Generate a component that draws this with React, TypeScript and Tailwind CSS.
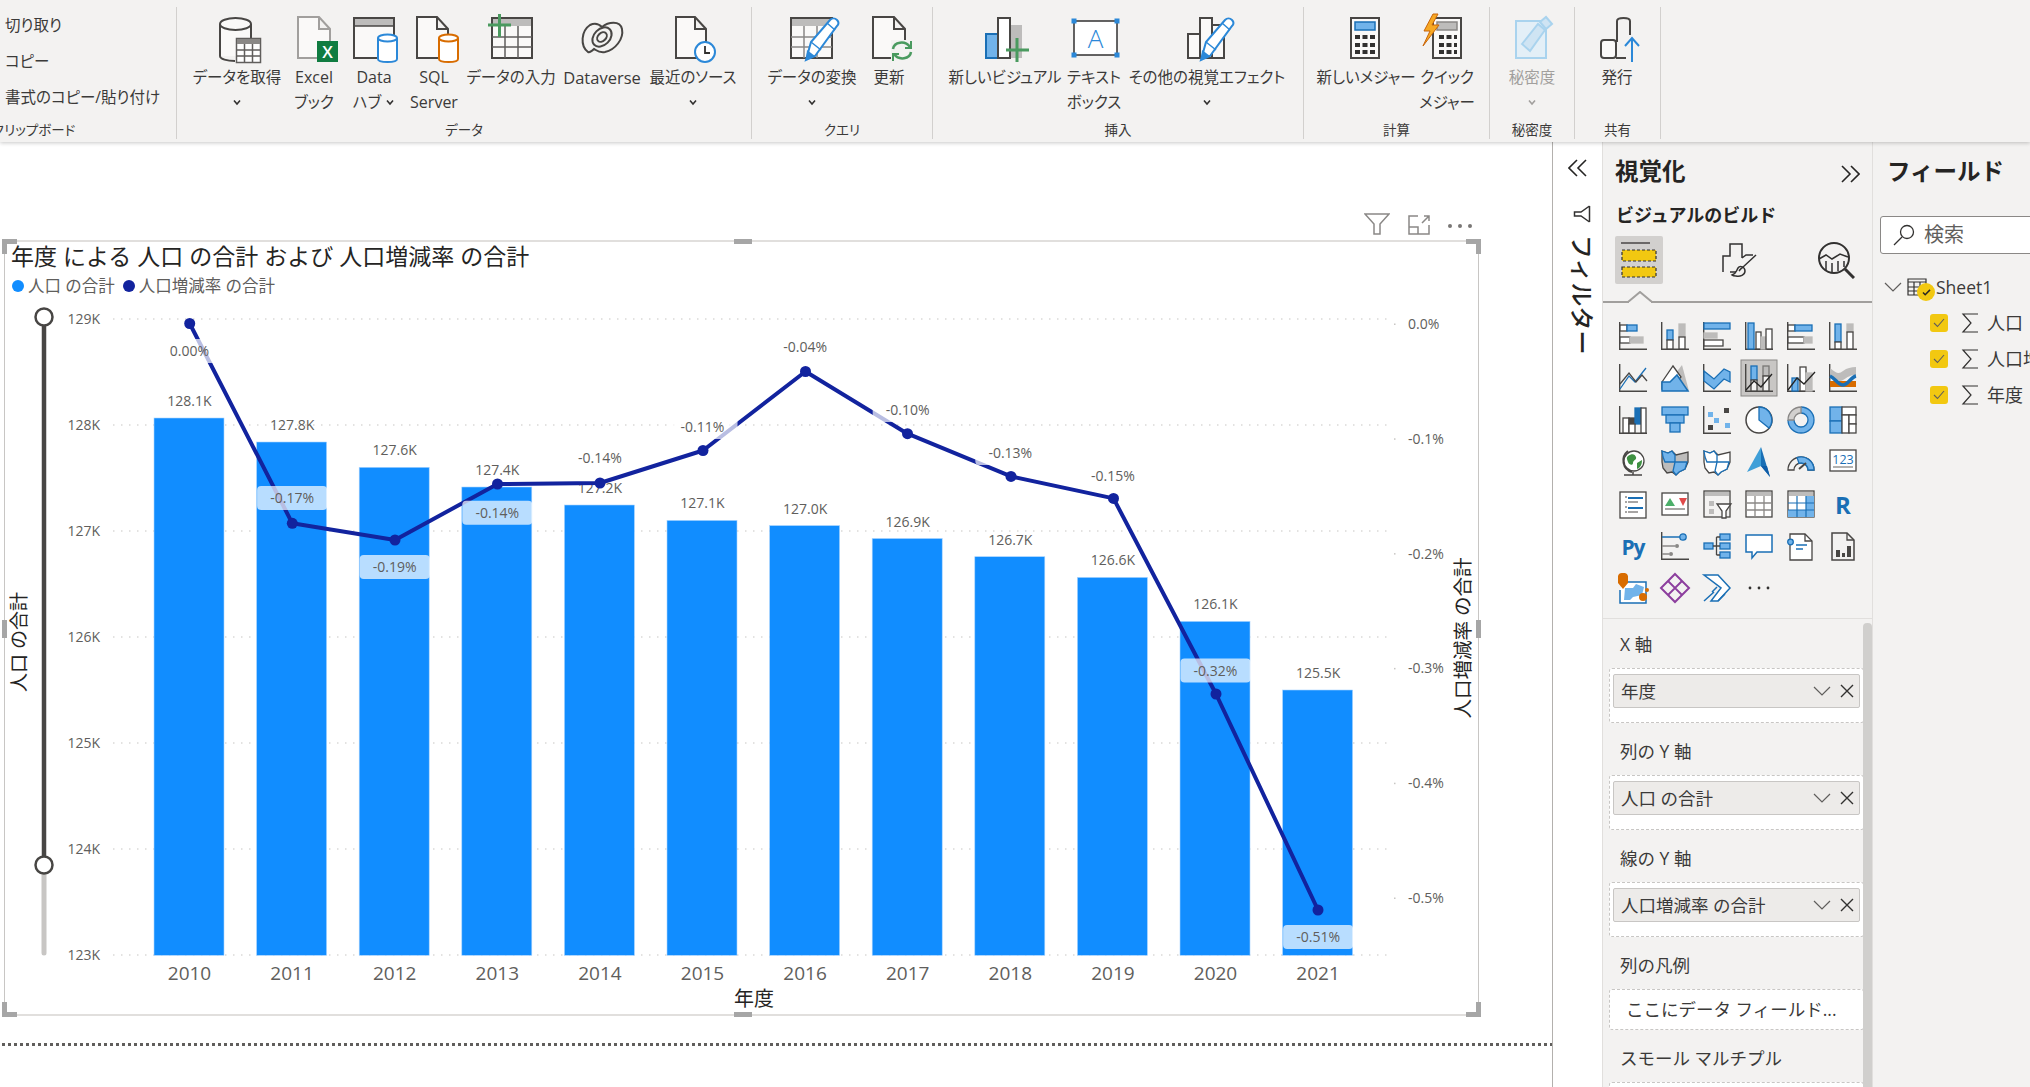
import type { ReactNode } from 'react';

const D = '#484644';
const B = '#1a6fb5';
const L = '#71b3ea';
const G = '#bdbcbb';
const W = '#ffffff';
const Y = '#f2c811';

function Chevron({ className = 'w-[10px] h-[7px]', color = '#323130' }: { className?: string; color?: string }) {
  return (
    <svg viewBox="0 0 10 7" className={className} fill="none" stroke={color} strokeWidth="1.6">
      <path d="M2 1.5l3 3.5 3-3.5" />
    </svg>
  );
}

function Pencil({ x, y, scale = 1 }: { x: number; y: number; scale?: number }) {
  return (
    <g transform={`translate(${x} ${y}) scale(${scale})`} fill="none">
      <path d="M0 28L5 10 24-12c2-2 5-2 7 0s2 4 0 6L9 24z" fill="#fff" stroke="#2b88d8" strokeWidth="2" />
      <path d="M0 28l1-10 8 6z" fill="#2b88d8" />
      <path d="M5 10l10 8M21-9l8 7" stroke="#2b88d8" strokeWidth="1.5" />
    </g>
  );
}

function Cylinder({ x, y, w, h, color, fill = '#fff' }: { x: number; y: number; w: number; h: number; color: string; fill?: string }) {
  const rx = w / 2;
  return (
    <g stroke={color} strokeWidth="2" fill={fill}>
      <path d={`M${x} ${y + 3}v${h - 6}c0 4 ${w} 4 ${w} 0v-${h - 6}`} />
      <ellipse cx={x + rx} cy={y + 3} rx={rx} ry="3.5" />
    </g>
  );
}

function Doc({ x, w = 31, color = '#605e5c', bg = '#faf9f8' }: { x: number; w?: number; color?: string; bg?: string }) {
  return (
    <path d={`M${x} 1h${w - 11}l11 12v29h-${w}zM${x + w - 11} 1v12h11`} fill={bg} stroke={color} strokeWidth="2" />
  );
}

function RibbonIcon({ children }: { children: ReactNode }) {
  return (
    <svg viewBox="0 0 48 48" className="w-[48px] h-[48px] shrink-0 overflow-visible" fill="none">
      {children}
    </svg>
  );
}

function RibbonButton({
  icon,
  lines,
  chevron,
  chevronColor,
  className,
  textClass = 'text-[15.5px] text-[#3b3a39]',
}: {
  icon: ReactNode;
  lines: ReactNode[];
  chevron?: boolean;
  chevronColor?: string;
  className: string;
  textClass?: string;
}) {
  return (
    <div className={`flex flex-col items-center shrink-0 whitespace-nowrap ${textClass} leading-[25px] ${className}`}>
      {icon}
      <div className="mt-[1px]" />
      {lines.map((line, i) => (
        <div key={i} className="flex items-center gap-[4px]">
          {line}
        </div>
      ))}
      {chevron && (
        <div className="h-[25px] flex items-center">
          <Chevron color={chevronColor} />
        </div>
      )}
    </div>
  );
}

function RibbonGroup({
  label,
  className,
  labelClass = 'text-center',
  children,
}: {
  label: string;
  className: string;
  labelClass?: string;
  children: ReactNode;
}) {
  return (
    <div className={`mt-[7px] h-[132px] flex flex-col border-r border-[#d2d0ce] shrink-0 ${className}`}>
      <div className="h-[114px] flex items-start">{children}</div>
      <div className={`h-[18px] leading-[18px] text-[13.5px] text-[#3b3a39] whitespace-nowrap ${labelClass}`}>{label}</div>
    </div>
  );
}

function Ribbon() {
  return (
    <div className="h-[142px] bg-[#f3f2f1] flex shrink-0 shadow-[0_1px_4px_rgba(0,0,0,0.22)] relative z-10 [font-feature-settings:'palt']">
      <RibbonGroup label="クリップボード" className="w-[177px] overflow-hidden" labelClass="-ml-[8px]">
        <div className="pl-[5px] pt-[0px] text-[15.5px] text-[#3b3a39] whitespace-nowrap">
          <div className="h-[36px] leading-[36px]">切り取り</div>
          <div className="h-[36px] leading-[36px]">コピー</div>
          <div className="h-[36px] leading-[36px]">書式のコピー/貼り付け</div>
        </div>
      </RibbonGroup>

      <RibbonGroup label="データ" className="w-[575px]">
        <div className="flex pl-[22px] pt-[9px]">
          <RibbonButton
            className="w-[76px]"
            lines={['データを取得']}
            chevron
            icon={
              <RibbonIcon>
                <path d="M7 8c0-8 31-8 31 0v32H7z" fill="#faf9f8" stroke="none" />
                <path d="M7 40V8" stroke="#484644" strokeWidth="2" />
                <path d="M38 22V8" stroke="#484644" strokeWidth="2" />
                <ellipse cx="22.5" cy="8" rx="15.5" ry="6" fill="#faf9f8" stroke="#484644" strokeWidth="2" />
                <path d="M7 40c0 3 7 5 15 5" stroke="#484644" strokeWidth="2" />
                <rect x="23.5" y="22.5" width="24" height="24" fill="#fff" stroke="#605e5c" strokeWidth="1.5" />
                <rect x="24" y="23" width="23" height="5" fill="#8a8886" />
                <path d="M24 34h23M24 40h23M31.5 28v18M39.5 28v18" stroke="#605e5c" strokeWidth="1.5" />
              </RibbonIcon>
            }
          />
          <RibbonButton
            className="w-[78px]"
            textClass="text-[16px] text-[#3b3a39]"
            lines={['Excel', <span className="text-[15.5px]">ブック</span>]}
            icon={
              <RibbonIcon>
                <Doc x={8} w={32} color="#a19f9d" />
                <rect x="27" y="25" width="21" height="21" fill="#107c41" />
                <text x="37.5" y="42" fontSize="17" fill="#fff" textAnchor="middle" fontWeight="600">X</text>
              </RibbonIcon>
            }
          />
          <RibbonButton
            className="w-[42px]"
            textClass="text-[16px] text-[#3b3a39]"
            lines={[
              'Data',
              <>
                <span className="text-[15.5px]">ハブ</span>
                <Chevron />
              </>,
            ]}
            icon={
              <RibbonIcon>
                <rect x="4" y="2" width="40" height="40" fill="#faf9f8" stroke="#484644" strokeWidth="2" />
                <rect x="5" y="3" width="38" height="7" fill="#bdbcbb" />
                <path d="M4 10h40" stroke="#484644" strokeWidth="1.5" />
                <Cylinder x={28} y={19} w={19} h={27} color="#2b88d8" />
              </RibbonIcon>
            }
          />
          <RibbonButton
            className="w-[78px]"
            textClass="text-[16px] text-[#3b3a39]"
            lines={['SQL', 'Server']}
            icon={
              <RibbonIcon>
                <Doc x={7} w={31} color="#484644" />
                <Cylinder x={29} y={19} w={19} h={27} color="#d86c00" />
              </RibbonIcon>
            }
          />
          <RibbonButton
            className="w-[76px]"
            lines={['データの入力']}
            icon={
              <RibbonIcon>
                <rect x="5" y="2" width="40" height="40" fill="#faf9f8" stroke="#484644" strokeWidth="2" />
                <rect x="6" y="3" width="38" height="7" fill="#bdbcbb" />
                <path d="M5 21h40M5 31h40M18 10v32M31 10v32" stroke="#605e5c" strokeWidth="1.5" />
                <path d="M1 9h23M12.5 -2v23" stroke="#4a9a5f" strokeWidth="3" />
              </RibbonIcon>
            }
          />
          <RibbonButton
            className="w-[106px]"
            textClass="text-[16.5px] text-[#3b3a39]"
            lines={['Dataverse']}
            icon={
              <RibbonIcon>
                <g stroke="#484644" strokeWidth="2">
                  <path d="M10 36C2 30 3 15 12 9c6-3 10 0 12 2 6-5 18-7 20 2 2 10-7 21-17 23-6 1-9-2-11-3-2 2-4 4-6 3z" />
                  <ellipse cx="24" cy="21" rx="11" ry="8" transform="rotate(-45 24 21)" />
                  <ellipse cx="24" cy="21" rx="5.5" ry="4" transform="rotate(-45 24 21)" />
                </g>
              </RibbonIcon>
            }
          />
          <RibbonButton
            className="w-[76px]"
            lines={['最近のソース']}
            chevron
            icon={
              <RibbonIcon>
                <Doc x={7} w={30} color="#484644" />
                <circle cx="36" cy="36" r="10" fill="#fff" stroke="#2b88d8" strokeWidth="2" />
                <path d="M36 30v7h5" stroke="#323130" strokeWidth="1.8" />
              </RibbonIcon>
            }
          />
        </div>
      </RibbonGroup>

      <RibbonGroup label="クエリ" className="w-[181px]">
        <div className="flex pl-[10px] pt-[9px]">
          <RibbonButton
            className="w-[100px]"
            lines={['データの変換']}
            chevron
            icon={
              <RibbonIcon>
                <rect x="3" y="2" width="41" height="40" fill="#faf9f8" stroke="#484644" strokeWidth="2" />
                <rect x="4" y="3" width="39" height="7" fill="#bdbcbb" />
                <path d="M3 21h41M3 31h41M16 10v32M29 10v32" stroke="#8a8886" strokeWidth="1.5" />
                <Pencil x={18} y={16} />
              </RibbonIcon>
            }
          />
          <RibbonButton
            className="w-[54px]"
            lines={['更新']}
            icon={
              <RibbonIcon>
                <Doc x={8} w={32} color="#484644" />
                <rect x="26" y="24" width="22" height="22" fill="#f3f2f1" />
                <path d="M28 33c1-7 12-9 17-2M46 36c-1 7-12 9-17 2" stroke="#4a9a5f" strokeWidth="2.5" />
                <path d="M46 25v7h-6M28 45v-7h6" stroke="#4a9a5f" strokeWidth="2" />
              </RibbonIcon>
            }
          />
        </div>
      </RibbonGroup>

      <RibbonGroup label="挿入" className="w-[371px]">
        <div className="flex pl-[17px] pt-[9px]">
          <RibbonButton
            className="w-[110px]"
            lines={['新しいビジュアル']}
            icon={
              <RibbonIcon>
                <rect x="5" y="18" width="12" height="24" fill="#71b3ea" stroke="#1a6fb5" strokeWidth="2" />
                <rect x="29" y="9" width="12" height="33" fill="#bdbcbb" />
                <rect x="17" y="2" width="12" height="40" fill="#fff" stroke="#484644" strokeWidth="2" />
                <path d="M25 34h23M36 22v24" stroke="#4a9a5f" strokeWidth="3" />
              </RibbonIcon>
            }
          />
          <RibbonButton
            className="w-[68px]"
            lines={['テキスト', 'ボックス']}
            icon={
              <RibbonIcon>
                <rect x="4" y="5" width="43" height="34" fill="#fff" stroke="#323130" strokeWidth="1.5" />
                <g fill="#2b88d8">
                  <rect x="1.5" y="2.5" width="5" height="5" />
                  <rect x="44.5" y="2.5" width="5" height="5" />
                  <rect x="1.5" y="36.5" width="5" height="5" />
                  <rect x="44.5" y="36.5" width="5" height="5" />
                </g>
                <text x="25.5" y="32" fontSize="26" fill="#2b88d8" textAnchor="middle" fontWeight="300">A</text>
              </RibbonIcon>
            }
          />
          <RibbonButton
            className="w-[158px]"
            lines={['その他の視覚エフェクト']}
            chevron
            icon={
              <RibbonIcon>
                <rect x="5" y="18" width="12" height="24" fill="#faf9f8" stroke="#484644" strokeWidth="2" />
                <rect x="29" y="9" width="12" height="33" fill="#faf9f8" stroke="#484644" strokeWidth="2" />
                <rect x="17" y="2" width="12" height="40" fill="#faf9f8" stroke="#484644" strokeWidth="2" />
                <Pencil x={18} y={16} />
              </RibbonIcon>
            }
          />
        </div>
      </RibbonGroup>

      <RibbonGroup label="計算" className="w-[186px]">
        <div className="flex pl-[12px] pt-[9px]">
          <RibbonButton
            className="w-[100px]"
            lines={['新しいメジャー']}
            icon={
              <RibbonIcon>
                <rect x="9" y="2" width="28" height="40" fill="#faf9f8" stroke="#484644" strokeWidth="2" />
                <rect x="13" y="6" width="20" height="8" fill="#71b3ea" stroke="#1a6fb5" strokeWidth="1.5" />
                <path d="M13 21h20M13 29h20M13 36h20" stroke="#323130" strokeWidth="4" strokeDasharray="5 2.5" />
              </RibbonIcon>
            }
          />
          <RibbonButton
            className="w-[62px]"
            lines={['クイック', 'メジャー']}
            icon={
              <RibbonIcon>
                <rect x="10" y="2" width="28" height="40" fill="#faf9f8" stroke="#484644" strokeWidth="2" />
                <rect x="14" y="6" width="20" height="8" fill="#bdbcbb" stroke="#8a8886" strokeWidth="1.5" />
                <path d="M16 21h18M16 29h18M16 36h18" stroke="#323130" strokeWidth="4" strokeDasharray="5 2.5" />
                <path d="M10-2L1 15h6L0 30 16 9H9l6-11z" fill="#f7a823" stroke="#c8650a" strokeWidth="1" />
              </RibbonIcon>
            }
          />
        </div>
      </RibbonGroup>

      <RibbonGroup label="秘密度" className="w-[85px]">
        <div className="flex pl-[7px] pt-[9px]">
          <RibbonButton
            className="w-[70px]"
            textClass="text-[15.5px] text-[#a19f9d]"
            lines={['秘密度']}
            chevron
            chevronColor="#a19f9d"
            icon={
              <RibbonIcon>
                <rect x="8" y="5" width="30" height="37" fill="#e3eff7" stroke="#a9d3ee" strokeWidth="2" />
                <path d="M14 28L30 8l7 6-15 21z" fill="#cfe4f3" stroke="#a9d3ee" strokeWidth="2" />
                <path d="M32 6l6-5 6 7-6 5z" fill="#cfe4f3" stroke="#a9d3ee" strokeWidth="2" />
              </RibbonIcon>
            }
          />
        </div>
      </RibbonGroup>

      <RibbonGroup label="共有" className="w-[86px]">
        <div className="flex pl-[12px] pt-[9px]">
          <RibbonButton
            className="w-[60px]"
            lines={['発行']}
            icon={
              <RibbonIcon>
                <rect x="8" y="24" width="15" height="18" rx="3" fill="#faf9f8" stroke="#484644" strokeWidth="2" />
                <path d="M24 26V5c0-4 13-4 13 0v14M23 42h10" stroke="#484644" strokeWidth="2" />
                <path d="M39 46V22M32 30l7-8 7 8" stroke="#2b88d8" strokeWidth="2" />
              </RibbonIcon>
            }
          />
        </div>
      </RibbonGroup>
    </div>
  );
}

const bars = [418, 442, 467.3, 487, 505, 520.4, 525.6, 538.5, 556.7, 577.4, 621.4, 690];
const barLabels = ['128.1K', '127.8K', '127.6K', '127.4K', '127.2K', '127.1K', '127.0K', '126.9K', '126.7K', '126.6K', '126.1K', '125.5K'];
const points: [number, number][] = [
  [189.7, 323.5],
  [292.3, 523.3],
  [395, 540],
  [497.5, 484],
  [600, 483],
  [703, 450.5],
  [805.5, 371.5],
  [907.5, 433.7],
  [1011, 476.4],
  [1113.5, 498.4],
  [1216, 694],
  [1318, 910],
];
const lineLabels: [string, number][] = [
  ['0.00%', 351],
  ['-0.17%', 498],
  ['-0.19%', 567],
  ['-0.14%', 512.7],
  ['-0.14%', 458],
  ['-0.11%', 427],
  ['-0.04%', 347],
  ['-0.10%', 410],
  ['-0.13%', 453],
  ['-0.15%', 476],
  ['-0.32%', 670.6],
  ['-0.51%', 937],
];
const leftTicks = ['129K', '128K', '127K', '126K', '125K', '124K', '123K'];
const rightTicks = ['0.0%', '-0.1%', '-0.2%', '-0.3%', '-0.4%', '-0.5%'];

function Chart() {
  return (
    <svg viewBox="5 302 1473 712" className="block w-[1473px] h-[712px]">
      {leftTicks.map((t, i) => {
        const y = 319 + i * 106;
        return (
          <g key={t}>
            <line x1="113" x2="1392" y1={y} y2={y} stroke="#c8c6c4" strokeWidth="1.2" strokeDasharray="1.5 6.5" />
            <text x="100" y={y + 5} textAnchor="end" fontSize="14" fill="#605e5c">{t}</text>
          </g>
        );
      })}
      {rightTicks.map((t, i) => {
        const y = 324 + i * 114.8;
        return (
          <g key={t}>
            <rect x="1394" y={y - 0.5} width="1.5" height="1.5" fill="#c8c6c4" />
            <text x="1408" y={y + 5} fontSize="14" fill="#605e5c">{t}</text>
          </g>
        );
      })}

      {/* slider on the left axis */}
      <line x1="44" x2="44" y1="865" y2="953" stroke="#c8c6c4" strokeWidth="5" strokeLinecap="round" />
      <line x1="44" x2="44" y1="317" y2="865" stroke={D} strokeWidth="4.5" />
      <circle cx="44" cy="317" r="8.5" fill="#fff" stroke={D} strokeWidth="2.5" />
      <circle cx="44" cy="865" r="8.5" fill="#fff" stroke={D} strokeWidth="2.5" />

      {bars.map((top, i) => (
        <rect key={i} x={154 + i * 102.6} y={top} width="70" height={955.3 - top} fill="#118dff" stroke="#a9d4ff" strokeWidth="0.6" />
      ))}
      {bars.map((top, i) => (
        <text key={i} x={189.5 + i * 102.6} y={top - 12} textAnchor="middle" fontSize="14" fill="#605e5c">
          {barLabels[i]}
        </text>
      ))}

      <polyline points={points.map((p) => p.join(',')).join(' ')} fill="none" stroke="#12239e" strokeWidth="4" strokeLinejoin="round" />
      {points.map(([x, y], i) => (
        <circle key={i} cx={x} cy={y} r="5.5" fill="#12239e" />
      ))}

      {lineLabels.map(([label, y], i) => (
        <g key={i}>
          <rect x={154.5 + i * 102.6} y={y - 12} width="70" height="24" rx="4" fill="#fff" fillOpacity="0.7" />
          <text x={189.5 + i * 102.6} y={y + 5} textAnchor="middle" fontSize="14" fill="#605e5c">
            {label}
          </text>
        </g>
      ))}

      {[2010, 2011, 2012, 2013, 2014, 2015, 2016, 2017, 2018, 2019, 2020, 2021].map((year, i) => (
        <text key={year} x={189.5 + i * 102.6} y="980" textAnchor="middle" fontSize="19" fill="#605e5c">
          {year}
        </text>
      ))}
      <text x="754" y="1006" textAnchor="middle" fontSize="20" fill="#252423">年度</text>
      <text transform="translate(26 642) rotate(-90)" textAnchor="middle" fontSize="19" fill="#252423">人口 の合計</text>
      <text transform="translate(1470 638) rotate(-90)" textAnchor="middle" fontSize="19.5" fill="#252423">人口増減率 の合計</text>
    </svg>
  );
}

function Corner({ className }: { className: string }) {
  return (
    <svg viewBox="0 0 15 15" className={`absolute w-[15px] h-[15px] ${className}`} fill="#a6a6a6">
      <path d="M0 0h15v5H5v10H0z" />
    </svg>
  );
}

function Canvas() {
  return (
    <div className="w-[1552px] shrink-0 bg-white">
      <div className="h-[98px] flex items-end justify-end pr-[80px] pb-[5px] gap-[18px]">
        <svg viewBox="0 0 26 22" className="w-[26px] h-[22px]" fill="none" stroke="#8a8886" strokeWidth="1.5">
          <path d="M1 1h24l-9 10v10h-6V11z" />
        </svg>
        <svg viewBox="0 0 22 20" className="w-[22px] h-[20px]" fill="none" stroke="#8a8886" strokeWidth="1.5">
          <path d="M10 1H1v18h20V10M1 12h9v7M14 8l7-7M16 1h5v5" />
        </svg>
        <div className="flex gap-[6px] pb-[7px]">
          <span className="w-[4px] h-[4px] rounded-full bg-[#797775]" />
          <span className="w-[4px] h-[4px] rounded-full bg-[#797775]" />
          <span className="w-[4px] h-[4px] rounded-full bg-[#797775]" />
        </div>
      </div>

      <div className="relative ml-[4px] w-[1475px] h-[776px] border-y-2 border-x border-y-[#e1dfdd] border-x-[#c8c6c4]">
        <Corner className="-left-[3px] -top-[3px]" />
        <Corner className="-right-[3px] -top-[3px] rotate-90" />
        <Corner className="-left-[3px] -bottom-[3px] -rotate-90" />
        <Corner className="-right-[3px] -bottom-[3px] rotate-180" />
        <div className="absolute left-[729px] -top-[3px] w-[18px] h-[5px] bg-[#a6a6a6]" />
        <div className="absolute left-[729px] -bottom-[3px] w-[18px] h-[5px] bg-[#a6a6a6]" />
        <div className="absolute -left-[3px] top-[378px] w-[5px] h-[18px] bg-[#a6a6a6]" />
        <div className="absolute -right-[3px] top-[378px] w-[5px] h-[18px] bg-[#a6a6a6]" />

        <div className="h-[28px] pl-[6px] leading-[28px] text-[23px] text-[#252423] whitespace-nowrap">
          年度 による 人口 の合計 および 人口増減率 の合計
        </div>
        <div className="h-[32px] flex items-center pl-[7px] text-[16.5px] text-[#605e5c] whitespace-nowrap">
          <span className="w-[12px] h-[12px] rounded-full bg-[#118dff] mr-[4px]" />
          <span>人口 の合計</span>
          <span className="w-[12px] h-[12px] rounded-full bg-[#12239e] ml-[8px] mr-[4px]" />
          <span>人口増減率 の合計</span>
        </div>
        <Chart />
      </div>

      <div className="mt-[27px] ml-[2px] h-[3px] bg-[repeating-linear-gradient(90deg,#605e5c_0_3px,transparent_3px_6px)]" />
    </div>
  );
}

function FilterPane() {
  return (
    <div className="w-[50px] shrink-0 bg-white border-l border-[#b3b0ad] flex flex-col items-center">
      <svg viewBox="0 0 20 18" className="w-[20px] h-[18px] mt-[17px]" fill="none" stroke="#252423" strokeWidth="1.6">
        <path d="M9 1L1 9l8 8M18 1l-8 8 8 8" />
      </svg>
      <svg viewBox="0 0 18 18" className="w-[18px] h-[18px] mt-[28px] ml-[9px]" fill="none" stroke="#323130" strokeWidth="1.5">
        <path d="M16.5 1v16V1zM16.5 1L8 7H1.5v4H8l8.5 6" />
      </svg>
      <div className="mt-[12px] ml-[9px] [writing-mode:vertical-rl] [text-orientation:sideways] text-[24px] leading-[30px] font-medium text-[#252423] whitespace-nowrap">
        フィルター
      </div>
    </div>
  );
}

function VizIcon({ children }: { children: ReactNode }) {
  return (
    <svg viewBox="0 0 28 28" className="w-[28px] h-[28px] overflow-visible" fill="none" strokeWidth="1.3">
      {children}
    </svg>
  );
}

const Axis = () => <path d="M.7 0v27.3H28" stroke={D} strokeWidth="1.4" />;

function R({ x, y, w, h, f = W, s = D }: { x: number; y: number; w: number; h: number; f?: string; s?: string }) {
  return <rect x={x} y={y} width={w} height={h} fill={f} stroke={s} strokeWidth="1.3" />;
}

const vizIcons: ReactNode[] = [
  <><Axis /><R x={1} y={3} w={7} h={6} /><R x={8} y={3} w={10} h={6} f={L} s={B} /><R x={1} y={15} w={10} h={6} /><R x={11} y={15} w={13} h={6} f={G} s={G} /></>,
  <><Axis /><R x={6} y={8} w={6} h={10} f={L} s={B} /><R x={6} y={18} w={6} h={9} /><R x={18} y={2} w={6} h={13} f={G} s={G} /><R x={18} y={15} w={6} h={12} /></>,
  <><Axis /><R x={1} y={1} w={26} h={6} f={L} s={B} /><R x={1} y={11} w={13} h={5} f={G} s={G} /><R x={1} y={18} w={19} h={6} /></>,
  <><Axis /><R x={3} y={1} w={6} h={26} f={L} s={B} /><R x={11} y={10} w={5} h={17} /><R x={16} y={15} w={5} h={12} f={G} s={G} /><R x={21} y={7} w={6} h={20} /></>,
  <><Axis /><R x={1} y={3} w={7} h={6} /><R x={8} y={3} w={17} h={6} f={L} s={B} /><R x={1} y={15} w={16} h={6} /><R x={17} y={15} w={8} h={6} f={G} s={G} /></>,
  <><Axis /><R x={6} y={2} w={6} h={18} f={L} s={B} /><R x={6} y={20} w={6} h={7} /><R x={18} y={2} w={6} h={8} f={G} s={G} /><R x={18} y={10} w={6} h={17} /></>,
  <><Axis /><path d="M1 25L10 12l6 6 11-14" stroke={B} /><path d="M1 20l9-11 7 9 6-7 5 6" stroke={D} /></>,
  <><path d="M14 10l7-9 7 26H14z" fill={G} /><path d="M1 18L12 2l8 11-11 12H1z" fill={W} stroke={D} /><path d="M1 27v-9l8 0 7-7 11 16z" fill={L} stroke={B} strokeWidth="1.5" /></>,
  <><path d="M.7 0v27.3H28" stroke={D} strokeWidth="1.4" /><path d="M1 7l10 8 10-10 6 3v10l-6-3-10 10-10-8z" fill={L} stroke={B} /></>,
  <g><rect x="-4" y="-4" width="36" height="36" fill="#c8c6c4" stroke="#8a8886" strokeWidth="1" /><Axis /><R x={6} y={2} w={6} h={14} f={L} s={B} /><R x={6} y={16} w={6} h={11} f="#f3f2f1" /><R x={18} y={2} w={6} h={10} f={G} s="#797775" /><R x={18} y={12} w={6} h={15} f="#f3f2f1" /><path d="M1 26l8-9 7 6 11-13" stroke="#252423" /></g>,
  <><Axis /><R x={5} y={14} w={6} h={13} f={L} s={B} /><R x={13} y={3} w={6} h={24} /><R x={19} y={9} w={6} h={18} f={G} s={G} /><path d="M1 26l9-12 7 6 11-12" stroke="#252423" /></>,
  <><Axis /><path d="M1 4c7 6 9 6 13 3s8-4 13-4v8c-6 0-8 2-13 5S6 14 1 12z" fill={G} stroke="none" /><rect x="1" y="17" width="26" height="6" fill="#d86c00" /><path d="M1 12c5 2 8 9 13 9s8-8 13-9" stroke={B} strokeWidth="3.5" /></>,
  <><Axis /><R x={4} y={12} w={6} h={15} /><R x={10} y={12} w={6} h={6} f={D} s={D} /><R x={16} y={2} w={6} h={16} f={B} s={B} /><R x={22} y={2} w={5} h={25} /><R x={10} y={18} w={6} h={9} /></>,
  <><R x={1} y={1} w={26} h={8} f={L} s={B} /><R x={5} y={9} w={18} h={8} f={L} s={B} /><R x={9} y={17} w={10} h={9} f={L} s={B} /></>,
  <><Axis /><rect x="5" y="6" width="5" height="5" fill={L} /><rect x="11" y="12" width="5" height="5" fill={L} /><rect x="22" y="17" width="5" height="5" fill={L} /><rect x="21" y="2" width="5" height="5" fill={D} /><rect x="5" y="19" width="5" height="5" fill={D} /></>,
  <><circle cx="14" cy="14" r="13" fill="#fff" stroke={D} strokeWidth="1.5" /><path d="M14 1a13 13 0 0 1 10 21L14 14z" fill={L} stroke={B} /></>,
  <><circle cx="14" cy="14" r="10" stroke={L} strokeWidth="6" /><path d="M1 14a13 13 0 1 0 13-13M7 14a7 7 0 1 0 7-7" stroke={B} /><path d="M14 1A13 13 0 0 0 1 14h6a7 7 0 0 1 7-7z" fill="#d2d0ce" stroke="#8a8886" /></>,
  <><R x={1} y={1} w={12} h={14} f={L} s={B} /><R x={1} y={15} w={12} h={12} f={L} s={B} /><R x={13} y={1} w={14} h={8} s={D} /><R x={13} y={9} w={7} h={18} s={D} /><R x={20} y={9} w={7} h={9} s={D} /><R x={20} y={18} w={7} h={9} s={D} /></>,
  <><path d="M9 3a12 12 0 0 0 4 21" stroke={D} strokeWidth="2" /><circle cx="15" cy="13" r="10" fill="#fff" stroke={D} /><path d="M9 8c4-3 7-2 8 1s-3 3-3 6-4 2-5-1-2-4 0-6zM18 15l5-3c0 5-2 8-5 9z" fill="#3f9142" /><path d="M5 27h18M14 24v3" stroke={D} strokeWidth="1.5" /></>,
  <><path d="M1 3l6 2 4-2 4 4 12-3v10l-3 7-6 3-3 3-4-3-5 1-4-5-1-6z" fill={G} stroke={D} /><path d="M1 3l6 2 4-2 3 4v7H4L2 9z" fill={L} stroke={B} /><path d="M14 14h12l-2 7-6 3-3 3-3-4z" fill={L} stroke={B} /></>,
  <><path d="M1 3l6 2 4-2 4 4 12-3v10l-3 7-6 3-3 3-4-3-5 1-4-5-1-6z" fill="#fff" stroke={D} /><path d="M1 3l6 2 4-2 3 4v7H4L2 9z" fill="#fff" stroke={B} /><path d="M14 14h12l-2 7-6 3-3 3-3-4z" fill="#fff" stroke={B} /></>,
  <><path d="M16-1L2 24l14-6z" fill="#3f9fd8" /><path d="M16-1l9 30-9-11z" fill="#1a6fb5" /><path d="M16 18l9 11-3-11z" fill="#0f5da8" /></>,
  <><path d="M1 22a13 13 0 0 1 26 0h-6a7 7 0 0 0-14 0z" fill="#f3f2f1" stroke={D} /><path d="M10 9.500a13 13 0 0 1 17 12.500h-6a7 7 0 0 0-9-6.700z" fill={L} stroke={B} /><path d="M12 21l7-6" stroke={D} strokeWidth="2" /></>,
  <><R x={1} y={2} w={26} h={21} f="#fff" s={D} /><text x="14" y="16" fontSize="12.5" fill={B} textAnchor="middle">123</text><path d="M4 19h20" stroke="#8a8886" /></>,
  <><R x={1} y={2} w={26} h={26} s={D} /><path d="M6 7h2M6 12h2M6 17h2M6 22h2" stroke="#8a8886" strokeWidth="1.5" /><path d="M9 8h15M9 18h15" stroke={B} strokeWidth="2" /><path d="M9 12h10M9 22h10" stroke="#8a8886" strokeWidth="1.5" /></>,
  <><R x={1} y={3} w={26} h={22} s={D} /><path d="M9 8l5 8H4z" fill="#4caf6a" /><path d="M18 8h8l-4 8z" fill="#e04a4a" /><path d="M4 19h20" stroke="#8a8886" strokeWidth="1.5" /></>,
  <><R x={1} y={1} w={26} h={26} f="#f3f2f1" s={D} /><rect x="2" y="2" width="24" height="4" fill={G} /><rect x="6" y="11" width="5" height="5" fill={G} /><rect x="6" y="19" width="5" height="5" fill={G} /><path d="M14 14h14l-5 7v7h-4v-7z" fill="#fff" stroke={D} /></>,
  <><R x={1} y={1} w={26} h={26} f="#fff" s={D} /><rect x="2" y="2" width="24" height="4" fill={G} /><path d="M1 13h26M1 20h26M10 6v21M19 6v21" stroke="#8a8886" /></>,
  <><R x={1} y={1} w={26} h={26} f="#fff" s={D} /><rect x="2" y="2" width="24" height="4" fill={G} /><path d="M19 6h8v21h-8zM1 20h26v7H1z" fill={L} /><path d="M1 13h26M1 20h26M10 6v21M19 6v21" stroke={B} strokeWidth="1.2" /></>,
  <text x="14" y="24" fontSize="24" fontWeight="700" fill={B} textAnchor="middle" fontFamily="Open Sans">R</text>,
  <text x="14" y="23" fontSize="21" fontWeight="700" fill={B} textAnchor="middle" fontFamily="Open Sans" letterSpacing="-1">Py</text>,
  <><Axis /><path d="M1 5h18" stroke={B} strokeWidth="1.5" /><circle cx="22" cy="5" r="3.2" fill={L} stroke={B} /><path d="M1 14h13M1 22h7" stroke="#8a8886" strokeWidth="1.5" /><circle cx="16" cy="14" r="2" fill="#8a8886" /><circle cx="10" cy="22" r="2" fill="#8a8886" /></>,
  <><R x={1} y={11} w={9} h={6} f={L} s={B} /><R x={17} y={2} w={10} h={6} f={L} s={B} /><R x={17} y={11} w={10} h={6} f={L} s={B} /><R x={17} y={20} w={10} h={6} f={L} s={B} /><path d="M10 14h7M13.5 5v18M13.5 5H17M13.5 23H17" stroke={D} /></>,
  <path d="M1 3h26v17H12l-5 6v-6H1z" fill="#fff" stroke={B} strokeWidth="1.5" />,
  <><path d="M3 2h15l7 7v19H3z" fill="#fff" stroke={D} /><path d="M18 2v7h7" stroke={D} /><circle cx="3.5" cy="10" r="2.8" fill={L} stroke={B} /><path d="M9 13h11M9 17h7" stroke={B} strokeWidth="1.3" /></>,
  <><path d="M3 1h15l7 7v20H3z" fill="#f3f2f1" stroke={D} strokeWidth="1.5" /><path d="M18 1v7h7" stroke={D} /><path d="M7 25v-7h4v7zM13 25v-4h3v4zM18 25V14h4v11z" fill={D} /></>,
  <><path d="M4 8h23v21H1V16" fill="#fff" stroke={B} strokeWidth="1.5" /><path d="M6 14h8l3-4 8 3-2 8-9 2-3 3H5z" fill={L} /><path d="M-1 2a4 4 0 0 1 4-3h3a4 4 0 0 1 3 3v7l-5 6-5-6z" fill="#d86c00" /><circle cx="24" cy="23" r="4" fill="#d86c00" /><circle cx="28" cy="16" r="2" fill="#d86c00" /></>,
  <><path d="M14 0l14 14-14 14L0 14z" stroke="#8c3e9e" strokeWidth="2" /><path d="M7 7l14 14M21 7L7 21" stroke="#8c3e9e" strokeWidth="1.8" /></>,
  <><path d="M1 1h14l12 13-12 13H8l10-13z" fill="#fff" stroke={B} strokeWidth="1.5" /><path d="M1 27l10-9M15 27l7-7M9 18l5-5" stroke={B} strokeWidth="1.5" /></>,
  <g fill="#323130"><circle cx="5" cy="14" r="1.4" /><circle cx="14" cy="14" r="1.4" /><circle cx="23" cy="14" r="1.4" /></g>,
];

function Well({ label, field, placeholder, last }: { label: string; field?: string; placeholder?: string; last?: boolean }) {
  return (
    <>
      <div className="h-[24px] leading-[24px] pl-[17px] text-[17.5px] text-[#3b3a39] whitespace-nowrap">{label}</div>
      <div
        className={`mt-[12px] ml-[6px] w-[255px] rounded-[3px] border border-dashed border-[#c8c6c4] bg-white ${
          last ? 'h-[60px]' : field ? 'h-[55px] pt-[5px] px-[3px]' : 'h-[41px] pl-[16px] flex items-center'
        } ${last ? '' : 'mb-[16px]'}`}
      >
        {field && (
          <div className="h-[34px] pl-[7px] pr-[5px] flex items-center justify-between bg-[#edebe9] border border-[#c8c6c4] rounded-[2px] text-[17.5px] text-[#3b3a39] whitespace-nowrap">
            <span>{field}</span>
            <div className="flex items-center gap-[9px]">
              <svg viewBox="0 0 18 10" className="w-[18px] h-[10px]" fill="none" stroke="#605e5c" strokeWidth="1.2">
                <path d="M1 1l8 8 8-8" />
              </svg>
              <svg viewBox="0 0 14 14" className="w-[14px] h-[14px]" fill="none" stroke="#323130" strokeWidth="1.4">
                <path d="M1 1l12 12M13 1L1 13" />
              </svg>
            </div>
          </div>
        )}
        {placeholder && <span className="text-[17.5px] text-[#3b3a39] whitespace-nowrap">{placeholder}</span>}
      </div>
    </>
  );
}

function VizPane() {
  return (
    <div className="w-[271px] shrink-0 bg-[#f3f2f1] border-l border-r border-[#e1dfdd] overflow-hidden">
      <div className="h-[44px] pt-[14px] pl-[12px] pr-[12px] flex items-center justify-between">
        <span className="text-[23.5px] leading-[30px] font-bold text-[#252423]">視覚化</span>
        <svg viewBox="0 0 20 18" className="w-[20px] h-[18px] mt-[5px]" fill="none" stroke="#252423" strokeWidth="1.6">
          <path d="M2 1l8 8-8 8M11 1l8 8-8 8" />
        </svg>
      </div>
      <div className="mt-[17px] h-[24px] leading-[24px] pl-[13px] text-[18px] font-bold text-[#252423] whitespace-nowrap">ビジュアルのビルド</div>

      <div className="relative mt-[9px] pl-[12px] flex h-[67px] border-b-2 border-[#a19f9d] items-start">
        <div className="w-[48px] h-[48px] bg-[#d2d0ce] rounded-[2px]">
          <svg viewBox="0 0 48 48" className="w-[48px] h-[48px]">
            <path d="M6 7h29" stroke="#484644" strokeWidth="1.5" />
            <rect x="7" y="14" width="34" height="11" fill={Y} stroke="#323130" strokeWidth="1.2" strokeDasharray="3 2" />
            <rect x="7" y="31" width="34" height="10" fill={Y} stroke="#323130" strokeWidth="1.2" strokeDasharray="3 2" />
          </svg>
        </div>
        <svg viewBox="0 0 36 36" className="w-[36px] h-[36px] ml-[59px] mt-[6px]" fill="none" stroke="#323130" strokeWidth="1.5">
          <path d="M1 30V14h7V2h12v14M20 16l4-3h7M8 30h6" />
          <path d="M34 13L20 26c-2 1-2 2-3 3" />
          <path d="M14 34c4 1 9-1 9-5s-5-6-7-3-1 5-6 7c1 1 3 1 4 1z" />
        </svg>
        <svg viewBox="0 0 38 38" className="w-[38px] h-[38px] ml-[59px] mt-[5px]" fill="none" stroke="#323130" strokeWidth="1.5">
          <circle cx="17" cy="17" r="15" strokeWidth="2" />
          <path d="M2 18l7-4 6 4 8-5 8 3M9 20v9M15 22v9M21 20v10M27 20v6" />
          <path d="M28 28l9 9" strokeWidth="3" />
        </svg>
        <svg viewBox="0 0 26 12" className="absolute left-[24px] -bottom-[2px] w-[26px] h-[12px]" fill="#f3f2f1" stroke="#a19f9d" strokeWidth="2">
          <path d="M0 11h1L13 1l12 10h1" />
          <path d="M2 12h22" stroke="#f3f2f1" />
        </svg>
      </div>

      <div className="pt-[12px] pl-[9px] pb-[9px] border-b border-[#e1dfdd] grid grid-cols-[repeat(6,42px)] auto-rows-[42px] place-items-center">
        {vizIcons.map((icon, i) => (
          <VizIcon key={i}>{icon}</VizIcon>
        ))}
      </div>

      <div className="relative pt-[13px]">
        <div className="absolute right-0 top-[4px] bottom-0 w-[9px] bg-[#d0cfcd] rounded-t-[4px]" />
        <Well label="X 軸" field="年度" />
        <Well label="列の Y 軸" field="人口 の合計" />
        <Well label="線の Y 軸" field="人口増減率 の合計" />
        <Well label="列の凡例" placeholder="ここにデータ フィールド..." />
        <Well label="スモール マルチプル" last />
      </div>
    </div>
  );
}

function FieldRow({ label }: { label: string }) {
  return (
    <div className="h-[36px] flex items-center pl-[57px] whitespace-nowrap">
      <div className="w-[18px] h-[18px] rounded-[3px] bg-[#f2c811] flex items-center justify-center shrink-0">
        <svg viewBox="0 0 12 10" className="w-[12px] h-[10px]" fill="none" stroke="#605e5c" strokeWidth="1.1">
          <path d="M1 5l3.5 3.5L11 1" />
        </svg>
      </div>
      <svg viewBox="0 0 18 22" className="w-[18px] h-[22px] ml-[13px] shrink-0" fill="none" stroke="#323130" strokeWidth="1.2">
        <path d="M17 2H2l8 9-8 9h15" />
      </svg>
      <span className="ml-[8px] text-[18px] text-[#3b3a39]">{label}</span>
    </div>
  );
}

function FieldsPane() {
  return (
    <div className="flex-1 min-w-0 bg-[#f3f2f1] overflow-hidden">
      <div className="h-[44px] pt-[14px] pl-[14px] flex items-center text-[23.5px] leading-[30px] font-bold text-[#252423] whitespace-nowrap">
        フィールド
      </div>
      <div className="mt-[30px] ml-[7px] w-[200px] h-[38px] bg-white border border-[#8a8886] rounded-[3px] flex items-center pl-[12px]">
        <svg viewBox="0 0 22 22" className="w-[22px] h-[22px] shrink-0" fill="none" stroke="#323130" strokeWidth="1.3">
          <circle cx="14" cy="8" r="6.5" />
          <path d="M9 13l-8 8" />
        </svg>
        <span className="ml-[9px] text-[20px] text-[#605e5c]">検索</span>
      </div>
      <div className="mt-[20px] h-[26px] relative flex items-center pl-[11px] whitespace-nowrap">
        <svg viewBox="0 0 18 10" className="w-[18px] h-[10px] shrink-0" fill="none" stroke="#605e5c" strokeWidth="1.2">
          <path d="M1 1l8 8 8-8" />
        </svg>
        <svg viewBox="0 0 20 18" className="w-[20px] h-[18px] ml-[5px] shrink-0" fill="none" stroke="#323130" strokeWidth="1.2">
          <path d="M1 1h18v3H1zM1 4v13h18V4M1 9h18M1 13h18M7 4v13M13 4v13" />
        </svg>
        <span className="absolute left-[44px] top-[9px] w-[18px] h-[18px] rounded-full bg-[#f2c811] flex items-center justify-center">
          <svg viewBox="0 0 10 8" className="w-[9px] h-[7px]" fill="none" stroke="#252423" strokeWidth="1.7">
            <path d="M1 4l2.5 2.5L9 1" />
          </svg>
        </span>
        <span className="ml-[9px] text-[17.5px] text-[#3b3a39]">Sheet1</span>
      </div>
      <div className="mt-[5px]">
        <FieldRow label="人口" />
        <FieldRow label="人口増減率" />
        <FieldRow label="年度" />
      </div>
    </div>
  );
}

export default function App() {
  return (
    <div className="w-[2030px] h-[1087px] overflow-hidden flex flex-col bg-white [font-family:'Open_Sans','Noto_Sans_CJK_JP',sans-serif]">
      <Ribbon />
      <div className="flex flex-1 min-h-0">
        <Canvas />
        <FilterPane />
        <VizPane />
        <FieldsPane />
      </div>
    </div>
  );
}
